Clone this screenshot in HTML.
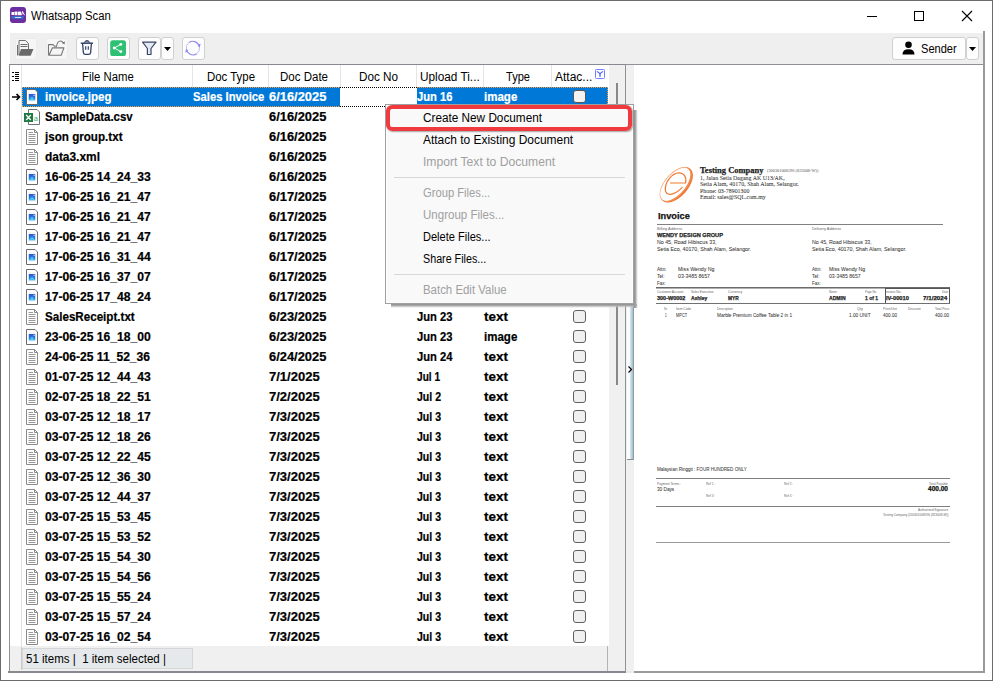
<!DOCTYPE html><html><head><meta charset="utf-8"><style>
html,body{margin:0;padding:0;width:993px;height:681px;overflow:hidden;background:#fff;font-family:'Liberation Sans', sans-serif;}
.r{position:absolute;}
.t{position:absolute;white-space:pre;line-height:1;transform-origin:0 0;}
.b{-webkit-text-stroke:0.2px currentColor;}
.db{-webkit-text-stroke:0.25px currentColor;}
.dr{-webkit-text-stroke:0.06px currentColor;}
</style></head><body>
<div class="r" style="left:0px;top:0px;width:993px;height:681px;background:#fff;"></div>
<div class="r" style="left:0px;top:0px;width:993px;height:1px;background:#6b6b6b;"></div>
<div class="r" style="left:0px;top:0px;width:1px;height:681px;background:#6b6b6b;"></div>
<div class="r" style="left:992px;top:0px;width:1px;height:681px;background:#6b6b6b;"></div>
<div class="r" style="left:0px;top:680px;width:993px;height:1px;background:#6b6b6b;"></div>
<svg class="r" style="left:10px;top:7px" width="16" height="16" viewBox="0 0 16 16">
<rect x="0" y="0" width="16" height="16" rx="3" fill="#6c2fa0"/>
<rect x="1.5" y="5" width="2.5" height="3" fill="#fff"/><rect x="4.5" y="4.6" width="3" height="3.6" fill="#fff"/><rect x="8" y="4.6" width="3" height="3.6" fill="#fff"/>
<path d="M11.5 8.2 L12.5 4.5 L14.5 8.2" stroke="#fff" stroke-width="1" fill="none"/>
<path d="M1 9.2 H14 L13 11.8 H2 Z" fill="#2a7ad5"/>
<rect x="5" y="10" width="6" height="1" fill="#cfe3ff"/>
</svg>
<div class="t" style="left:31.00px;top:9.84px;font-size:12px;transform:scaleX(0.9412);color:#000;font-family:'Liberation Sans', sans-serif;">Whatsapp Scan</div>
<div class="r" style="left:867px;top:16px;width:10px;height:1px;background:#000;"></div>
<div class="r" style="left:914px;top:11px;width:10px;height:10px;border:1px solid #000;box-sizing:border-box;"></div>
<svg class="r" style="left:961px;top:10px" width="12" height="12" viewBox="0 0 12 12"><path d="M1 1 L11 11 M11 1 L1 11" stroke="#000" stroke-width="1.1"/></svg>
<div class="r" style="left:10px;top:33px;width:973px;height:31px;background:#efefef;"></div>
<div class="r" style="left:15px;top:38px;width:22px;height:22px;background:#f6f6f6;border:1px solid #ececec;border-radius:3px;box-sizing:border-box;"></div>
<div class="r" style="left:46px;top:38px;width:22px;height:22px;background:#f6f6f6;border:1px solid #ececec;border-radius:3px;box-sizing:border-box;"></div>
<div class="r" style="left:76px;top:37px;width:23px;height:23px;background:#fdfdfd;border:1px solid #d0d0d0;border-radius:3px;box-sizing:border-box;"></div>
<div class="r" style="left:107px;top:37px;width:23px;height:23px;background:#fdfdfd;border:1px solid #d0d0d0;border-radius:3px;box-sizing:border-box;"></div>
<div class="r" style="left:138px;top:37px;width:23px;height:23px;background:#fdfdfd;border:1px solid #d0d0d0;border-radius:3px;box-sizing:border-box;"></div>
<div class="r" style="left:161px;top:37px;width:13px;height:23px;background:#fdfdfd;border:1px solid #d0d0d0;border-radius:3px;box-sizing:border-box;"></div>
<div class="r" style="left:182px;top:37px;width:23px;height:23px;background:#fdfdfd;border:1px solid #d0d0d0;border-radius:3px;box-sizing:border-box;"></div>
<svg class="r" style="left:0px;top:0px" width="993" height="70" viewBox="0 0 993 70">
<g fill="none" stroke="#6e6e6e" stroke-width="1">
<path d="M19 55 V40.5 H25.5 L28.5 43.5 V49"/>
<path d="M20.5 44.5 H27.5 M20.5 46.5 H27.5"/>
<path d="M17.5 45 V55.5"/>
</g>
<path d="M18.6 55.8 L21 49 H33.5 L30.6 55.8 Z" fill="#6a6a6a"/>
<g fill="none" stroke="#777" stroke-width="1.1" stroke-linejoin="round">
<path d="M48.5 55.2 V44.6 H53 L54.5 46.2 H57"/>
<path d="M49 55.2 L52.3 47.9 H63.9 L61.2 55.2 Z"/>
<path d="M56.5 46.5 Q57.5 40.5 61 41 Q62.8 41.3 63.4 43.4"/>
</g>
<path d="M61.7 42.8 L64.6 44.6 L64.9 41.5 Z" fill="#777"/>
<g stroke="#33416a" fill="none">
<path d="M80.8 43.2 H93" stroke-width="1.5"/>
<path d="M84.6 42.8 Q84.6 40.6 87 40.6 Q89.4 40.6 89.4 42.8" fill="#7c8296" stroke-width="1"/>
<path d="M82.6 43.8 L83.4 52.6 Q83.6 54.4 85.4 54.4 H88.6 Q90.4 54.4 90.6 52.6 L91.4 43.8" stroke-width="1.3"/>
<path d="M85.7 46.3 V49.8 M88.3 46.3 V49.8" stroke-width="1.2"/>
</g>
<rect x="110.2" y="40.2" width="15.8" height="15.8" rx="2.6" fill="#2fc173"/>
<path d="M114.3 48 L120.8 44.4 M114.3 48 L120.8 51.6" stroke="#fff" stroke-width="0.9"/>
<circle cx="114.3" cy="48" r="1.45" fill="#fff"/><circle cx="120.8" cy="44.4" r="1.45" fill="#fff"/><circle cx="120.8" cy="51.6" r="1.45" fill="#fff"/>
<path d="M142.6 42.2 H156 L151 48.5 V54.5 H147.4 V48.5 Z" fill="#e4e9f3" stroke="#3a4668" stroke-width="1.2" stroke-linejoin="round"/>
<path d="M164 47 H171 L167.5 51 Z" fill="#000"/>
<path d="M199.3 47 A6.6 6.6 0 0 0 189 42.5" fill="none" stroke="#8f8af2" stroke-width="1.1"/>
<path d="M186.5 49.2 A6.6 6.6 0 0 0 196.8 53.7" fill="none" stroke="#8f8af2" stroke-width="1.1"/>
<path d="M197.5 44.5 L199.6 47.8 L200.6 43.8 Z" fill="#8f8af2"/>
<path d="M188.3 51.7 L186.2 48.4 L185.2 52.4 Z" fill="#8f8af2"/>
<path d="M189 42.5 A6.6 6.6 0 0 0 186.4 49.3" fill="none" stroke="#b9b6f6" stroke-width="0.9"/>
<path d="M196.8 53.7 A6.6 6.6 0 0 0 199.4 46.9" fill="none" stroke="#b9b6f6" stroke-width="0.9"/>
</svg>
<div class="r" style="left:892px;top:37px;width:74px;height:23px;background:#fdfdfd;border:1px solid #d0d0d0;border-radius:3px;box-sizing:border-box;"></div>
<div class="r" style="left:966px;top:37px;width:13px;height:23px;background:#fdfdfd;border:1px solid #d0d0d0;border-radius:3px;box-sizing:border-box;"></div>
<svg class="r" style="left:902px;top:41px" width="14" height="14" viewBox="0 0 14 14">
<circle cx="6.5" cy="3.8" r="3.3" fill="#000"/><path d="M0.5 13.5 Q0.5 8.2 6.5 8.2 Q12.5 8.2 12.5 13.5 Z" fill="#000"/></svg>
<div class="t" style="left:921.00px;top:42.84px;font-size:12px;transform:scaleX(0.9231);color:#000;font-family:'Liberation Sans', sans-serif;">Sender</div>
<svg class="r" style="left:966px;top:37px" width="13" height="23" viewBox="0 0 13 23"><path d="M3 10 H10 L6.5 14 Z" fill="#000"/></svg>
<div class="r" style="left:9px;top:64px;width:617px;height:2px;background:#868a90;"></div>
<div class="r" style="left:626px;top:64px;width:358px;height:1px;background:#8e9297;"></div>
<div class="r" style="left:9px;top:64px;width:1px;height:608px;background:#8e9297;"></div>
<div class="r" style="left:8px;top:671px;width:618px;height:2px;background:#868a90;"></div>
<div class="r" style="left:626px;top:671px;width:8px;height:2px;background:#eaeaea;"></div>
<div class="r" style="left:634px;top:671px;width:351px;height:2px;background:#9a9a9a;"></div>
<div class="r" style="left:625px;top:64px;width:1px;height:607px;background:#8e9297;"></div>
<div class="r" style="left:609px;top:65px;width:16px;height:606px;background:#f0f0f0;"></div>
<div class="r" style="left:616px;top:83px;width:2px;height:302px;background:#888;"></div>
<div class="r" style="left:626px;top:65px;width:8px;height:606px;background:#f0f0f0;"></div>
<div class="r" style="left:627px;top:105px;width:7px;height:355px;background:linear-gradient(90deg,#fff 0,#fcfeff 40%,#cfe6f5 55%,#aac4d4 92%);border-right:1px solid #999;border-bottom:1px solid #8c8c8c;box-sizing:border-box;border-radius:0 0 1px 0;"></div>
<svg class="r" style="left:627px;top:365px" width="6" height="9" viewBox="0 0 6 9"><path d="M1.5 1.5 L4.5 4.5 L1.5 7.5" fill="none" stroke="#000" stroke-width="1.2"/></svg>
<div class="r" style="left:634px;top:65px;width:349px;height:606px;background:#fff;"></div>
<div class="r" style="left:983px;top:31px;width:2px;height:642px;background:#999;"></div>
<div class="r" style="left:10px;top:65px;width:599px;height:22px;background:#fff;"></div>
<div class="r" style="left:21px;top:65px;width:1px;height:22px;background:#e5e5e5;"></div>
<div class="r" style="left:192px;top:65px;width:1px;height:22px;background:#e5e5e5;"></div>
<div class="r" style="left:268px;top:65px;width:1px;height:22px;background:#e5e5e5;"></div>
<div class="r" style="left:340px;top:65px;width:1px;height:22px;background:#e5e5e5;"></div>
<div class="r" style="left:416px;top:65px;width:1px;height:22px;background:#e5e5e5;"></div>
<div class="r" style="left:483px;top:65px;width:1px;height:22px;background:#e5e5e5;"></div>
<div class="r" style="left:551px;top:65px;width:1px;height:22px;background:#e5e5e5;"></div>
<svg class="r" style="left:0px;top:60px" width="22" height="30" viewBox="0 60 22 30">
<g fill="#000"><rect x="12" y="72" width="2" height="1"/><rect x="12" y="76" width="2" height="1"/><rect x="12" y="80" width="2" height="1"/>
<rect x="15" y="72" width="4" height="1"/><rect x="15" y="74" width="4" height="1"/><rect x="15" y="76" width="4" height="1"/><rect x="15" y="78" width="4" height="1"/><rect x="15" y="80" width="4" height="1"/></g>
</svg>
<div class="t" style="left:82.00px;top:70.84px;font-size:12px;transform:scaleX(0.9455);color:#000;font-family:'Liberation Sans', sans-serif;">File Name</div>
<div class="t" style="left:206.50px;top:70.84px;font-size:12px;transform:scaleX(0.9510);color:#000;font-family:'Liberation Sans', sans-serif;">Doc Type</div>
<div class="t" style="left:280.00px;top:70.84px;font-size:12px;transform:scaleX(0.9600);color:#000;font-family:'Liberation Sans', sans-serif;">Doc Date</div>
<div class="t" style="left:359.00px;top:70.84px;font-size:12px;transform:scaleX(0.9750);color:#000;font-family:'Liberation Sans', sans-serif;">Doc No</div>
<div class="t" style="left:420.00px;top:70.84px;font-size:12px;transform:scaleX(0.9836);color:#000;font-family:'Liberation Sans', sans-serif;">Upload Ti...</div>
<div class="t" style="left:506.00px;top:70.84px;font-size:12px;transform:scaleX(0.9231);color:#000;font-family:'Liberation Sans', sans-serif;">Type</div>
<div class="t" style="left:555.00px;top:70.84px;font-size:12px;color:#000;font-family:'Liberation Sans', sans-serif;">Attac...</div>
<svg class="r" style="left:595px;top:69px" width="10" height="10" viewBox="0 0 10 10"><rect x="0.5" y="0.5" width="9" height="9" rx="0.8" fill="#fff" stroke="#7080ff" stroke-width="1"/><path d="M2.3 2.6 L5 4.6 L7.7 2.6" fill="none" stroke="#4a5cff" stroke-width="1.1" stroke-linecap="round"/><path d="M5 4.4 V7.3" stroke="#4a5cff" stroke-width="1.3" stroke-linecap="round"/></svg>
<div class="r" style="left:10px;top:87px;width:599px;height:560px;background:#fff;"></div>
<div class="r" style="left:21px;top:87px;width:1px;height:584px;background:#e0e0e0;"></div>
<div class="r" style="left:22px;top:87px;width:318px;height:20px;background:#0078d7;"></div>
<div class="r" style="left:417px;top:87px;width:191px;height:20px;background:#0078d7;"></div>
<div class="r" style="left:22px;top:87px;width:318px;height:1px;background:repeating-linear-gradient(90deg,#ff9b2f 0 1px,transparent 1px 2px);"></div>
<div class="r" style="left:22px;top:106px;width:318px;height:1px;background:repeating-linear-gradient(90deg,#ff9b2f 0 1px,transparent 1px 2px);"></div>
<div class="r" style="left:417px;top:87px;width:191px;height:1px;background:repeating-linear-gradient(90deg,#ff9b2f 0 1px,transparent 1px 2px);"></div>
<div class="r" style="left:417px;top:106px;width:191px;height:1px;background:repeating-linear-gradient(90deg,#ff9b2f 0 1px,transparent 1px 2px);"></div>
<div class="r" style="left:22px;top:87px;width:1px;height:20px;background:repeating-linear-gradient(180deg,#ff9b2f 0 1px,transparent 1px 2px);"></div>
<div class="r" style="left:607px;top:87px;width:1px;height:20px;background:repeating-linear-gradient(180deg,#ff9b2f 0 1px,transparent 1px 2px);"></div>
<div class="r" style="left:340px;top:87px;width:77px;height:1px;background:repeating-linear-gradient(90deg,#000 0 1px,transparent 1px 2px);"></div>
<div class="r" style="left:340px;top:106px;width:77px;height:1px;background:repeating-linear-gradient(90deg,#000 0 1px,transparent 1px 2px);"></div>
<svg class="r" style="left:12px;top:93px" width="9" height="8" viewBox="0 0 9 8"><path d="M0 4 H7 M4.5 1 L7.5 4 L4.5 7" fill="none" stroke="#000" stroke-width="1.6"/></svg>
<svg class="r" style="left:26px;top:89px" width="12" height="16" viewBox="0 0 12 16">
<path d="M0.5 0.5 H9 L11.5 3 V15.5 H0.5 Z" fill="#fff" stroke="#6a6a6a" stroke-width="1"/>
<rect x="2" y="3" width="8" height="10" fill="#f6f6f6"/>
<defs><linearGradient id="ig" x1="0" y1="0" x2="0" y2="1"><stop offset="0" stop-color="#2a55d0"/><stop offset="1" stop-color="#2f8ef0"/></linearGradient></defs>
<rect x="2.8" y="5" width="6.4" height="6.2" fill="url(#ig)"/>
<path d="M2.8 11.2 L6 7.6 L9.2 11.2 Z" fill="#3ec3f4"/>
<rect x="7.5" y="5.7" width="1.1" height="1.1" fill="#fff"/>
</svg>
<div class="t b" style="left:44.50px;top:90.84px;font-size:12px;font-weight:bold;transform:scaleX(0.9580);color:#fff;font-family:'Liberation Sans', sans-serif;">invoice.jpeg</div>
<div class="t b" style="left:193.30px;top:90.84px;font-size:12px;font-weight:bold;transform:scaleX(0.9382);color:#fff;font-family:'Liberation Sans', sans-serif;">Sales Invoice</div>
<div class="t b" style="left:269.40px;top:90.84px;font-size:12px;font-weight:bold;transform:scaleX(1.0741);color:#fff;font-family:'Liberation Sans', sans-serif;">6/16/2025</div>
<div class="t b" style="left:417.20px;top:90.84px;font-size:12px;font-weight:bold;transform:scaleX(0.9316);color:#fff;font-family:'Liberation Sans', sans-serif;">Jun 16</div>
<div class="t b" style="left:484.40px;top:90.84px;font-size:12px;font-weight:bold;transform:scaleX(0.9600);color:#fff;font-family:'Liberation Sans', sans-serif;">image</div>
<div class="r" style="left:573px;top:90px;width:13px;height:13px;background:#f3f3f3;border:1px solid #5a5555;border-radius:3px;box-sizing:border-box;"></div>
<svg class="r" style="left:24px;top:109px" width="17" height="16" viewBox="0 0 17 16">
<path d="M4.5 0.5 H13 L15.5 3 V15.5 H4.5 Z" fill="#fff" stroke="#707070" stroke-width="1"/>
<rect x="0" y="4" width="9" height="9" fill="#1d7a43"/>
<path d="M2.2 6 L6.8 11 M6.8 6 L2.2 11" stroke="#fff" stroke-width="1.3"/>
<text x="9.8" y="12.2" font-size="7.5" font-family="Liberation Sans" fill="#2fb86e">a</text>
</svg>
<div class="t b" style="left:44.50px;top:110.84px;font-size:12px;font-weight:bold;transform:scaleX(0.9522);color:#000;font-family:'Liberation Sans', sans-serif;">SampleData.csv</div>
<div class="t b" style="left:269.40px;top:110.84px;font-size:12px;font-weight:bold;transform:scaleX(1.0741);color:#000;font-family:'Liberation Sans', sans-serif;">6/16/2025</div>
<div class="r" style="left:573px;top:110px;width:13px;height:13px;background:#f0f0f0;border:1px solid #5f5f5f;border-radius:3px;box-sizing:border-box;"></div>
<svg class="r" style="left:26px;top:129px" width="12" height="16" viewBox="0 0 12 16">
<path d="M0.5 0.5 H8.5 L11.5 3.5 V15.5 H0.5 Z" fill="#fff" stroke="#8a8a8a" stroke-width="1"/>
<path d="M8.5 0.5 V3.5 H11.5" fill="none" stroke="#8a8a8a" stroke-width="1"/>
<path d="M2.5 3.5 H7 M2.5 5.5 H9.5 M2.5 7.5 H9.5 M2.5 9.5 H9.5 M2.5 11.5 H9.5 M2.5 13.5 H9.5" stroke="#9a9a9a" stroke-width="1"/>
</svg>
<div class="t b" style="left:45.47px;top:130.84px;font-size:12px;font-weight:bold;transform:scaleX(0.9691);color:#000;font-family:'Liberation Sans', sans-serif;">json group.txt</div>
<div class="t b" style="left:269.40px;top:130.84px;font-size:12px;font-weight:bold;transform:scaleX(1.0741);color:#000;font-family:'Liberation Sans', sans-serif;">6/16/2025</div>
<div class="r" style="left:573px;top:130px;width:13px;height:13px;background:#f0f0f0;border:1px solid #5f5f5f;border-radius:3px;box-sizing:border-box;"></div>
<svg class="r" style="left:26px;top:149px" width="12" height="16" viewBox="0 0 12 16">
<path d="M0.5 0.5 H8.5 L11.5 3.5 V15.5 H0.5 Z" fill="#fff" stroke="#8a8a8a" stroke-width="1"/>
<path d="M8.5 0.5 V3.5 H11.5" fill="none" stroke="#8a8a8a" stroke-width="1"/>
<path d="M2.5 3.5 H7 M2.5 5.5 H9.5 M2.5 7.5 H9.5 M2.5 9.5 H9.5 M2.5 11.5 H9.5 M2.5 13.5 H9.5" stroke="#9a9a9a" stroke-width="1"/>
</svg>
<div class="t b" style="left:44.50px;top:150.84px;font-size:12px;font-weight:bold;transform:scaleX(0.9927);color:#000;font-family:'Liberation Sans', sans-serif;">data3.xml</div>
<div class="t b" style="left:269.40px;top:150.84px;font-size:12px;font-weight:bold;transform:scaleX(1.0741);color:#000;font-family:'Liberation Sans', sans-serif;">6/16/2025</div>
<div class="r" style="left:573px;top:150px;width:13px;height:13px;background:#f0f0f0;border:1px solid #5f5f5f;border-radius:3px;box-sizing:border-box;"></div>
<svg class="r" style="left:26px;top:169px" width="12" height="16" viewBox="0 0 12 16">
<path d="M0.5 0.5 H9 L11.5 3 V15.5 H0.5 Z" fill="#fff" stroke="#6a6a6a" stroke-width="1"/>
<rect x="2" y="3" width="8" height="10" fill="#f6f6f6"/>
<defs><linearGradient id="ig" x1="0" y1="0" x2="0" y2="1"><stop offset="0" stop-color="#2a55d0"/><stop offset="1" stop-color="#2f8ef0"/></linearGradient></defs>
<rect x="2.8" y="5" width="6.4" height="6.2" fill="url(#ig)"/>
<path d="M2.8 11.2 L6 7.6 L9.2 11.2 Z" fill="#3ec3f4"/>
<rect x="7.5" y="5.7" width="1.1" height="1.1" fill="#fff"/>
</svg>
<div class="t b" style="left:44.50px;top:170.84px;font-size:12px;font-weight:bold;transform:scaleX(1.0095);color:#000;font-family:'Liberation Sans', sans-serif;">16-06-25 14_24_33</div>
<div class="t b" style="left:269.40px;top:170.84px;font-size:12px;font-weight:bold;transform:scaleX(1.0741);color:#000;font-family:'Liberation Sans', sans-serif;">6/16/2025</div>
<div class="r" style="left:573px;top:170px;width:13px;height:13px;background:#f0f0f0;border:1px solid #5f5f5f;border-radius:3px;box-sizing:border-box;"></div>
<svg class="r" style="left:26px;top:189px" width="12" height="16" viewBox="0 0 12 16">
<path d="M0.5 0.5 H9 L11.5 3 V15.5 H0.5 Z" fill="#fff" stroke="#6a6a6a" stroke-width="1"/>
<rect x="2" y="3" width="8" height="10" fill="#f6f6f6"/>
<defs><linearGradient id="ig" x1="0" y1="0" x2="0" y2="1"><stop offset="0" stop-color="#2a55d0"/><stop offset="1" stop-color="#2f8ef0"/></linearGradient></defs>
<rect x="2.8" y="5" width="6.4" height="6.2" fill="url(#ig)"/>
<path d="M2.8 11.2 L6 7.6 L9.2 11.2 Z" fill="#3ec3f4"/>
<rect x="7.5" y="5.7" width="1.1" height="1.1" fill="#fff"/>
</svg>
<div class="t b" style="left:44.50px;top:190.84px;font-size:12px;font-weight:bold;transform:scaleX(1.0095);color:#000;font-family:'Liberation Sans', sans-serif;">17-06-25 16_21_47</div>
<div class="t b" style="left:269.40px;top:190.84px;font-size:12px;font-weight:bold;transform:scaleX(1.0741);color:#000;font-family:'Liberation Sans', sans-serif;">6/17/2025</div>
<div class="r" style="left:573px;top:190px;width:13px;height:13px;background:#f0f0f0;border:1px solid #5f5f5f;border-radius:3px;box-sizing:border-box;"></div>
<svg class="r" style="left:26px;top:209px" width="12" height="16" viewBox="0 0 12 16">
<path d="M0.5 0.5 H9 L11.5 3 V15.5 H0.5 Z" fill="#fff" stroke="#6a6a6a" stroke-width="1"/>
<rect x="2" y="3" width="8" height="10" fill="#f6f6f6"/>
<defs><linearGradient id="ig" x1="0" y1="0" x2="0" y2="1"><stop offset="0" stop-color="#2a55d0"/><stop offset="1" stop-color="#2f8ef0"/></linearGradient></defs>
<rect x="2.8" y="5" width="6.4" height="6.2" fill="url(#ig)"/>
<path d="M2.8 11.2 L6 7.6 L9.2 11.2 Z" fill="#3ec3f4"/>
<rect x="7.5" y="5.7" width="1.1" height="1.1" fill="#fff"/>
</svg>
<div class="t b" style="left:44.50px;top:210.84px;font-size:12px;font-weight:bold;transform:scaleX(1.0095);color:#000;font-family:'Liberation Sans', sans-serif;">17-06-25 16_21_47</div>
<div class="t b" style="left:269.40px;top:210.84px;font-size:12px;font-weight:bold;transform:scaleX(1.0741);color:#000;font-family:'Liberation Sans', sans-serif;">6/17/2025</div>
<div class="r" style="left:573px;top:210px;width:13px;height:13px;background:#f0f0f0;border:1px solid #5f5f5f;border-radius:3px;box-sizing:border-box;"></div>
<svg class="r" style="left:26px;top:229px" width="12" height="16" viewBox="0 0 12 16">
<path d="M0.5 0.5 H9 L11.5 3 V15.5 H0.5 Z" fill="#fff" stroke="#6a6a6a" stroke-width="1"/>
<rect x="2" y="3" width="8" height="10" fill="#f6f6f6"/>
<defs><linearGradient id="ig" x1="0" y1="0" x2="0" y2="1"><stop offset="0" stop-color="#2a55d0"/><stop offset="1" stop-color="#2f8ef0"/></linearGradient></defs>
<rect x="2.8" y="5" width="6.4" height="6.2" fill="url(#ig)"/>
<path d="M2.8 11.2 L6 7.6 L9.2 11.2 Z" fill="#3ec3f4"/>
<rect x="7.5" y="5.7" width="1.1" height="1.1" fill="#fff"/>
</svg>
<div class="t b" style="left:44.50px;top:230.84px;font-size:12px;font-weight:bold;transform:scaleX(1.0095);color:#000;font-family:'Liberation Sans', sans-serif;">17-06-25 16_21_47</div>
<div class="t b" style="left:269.40px;top:230.84px;font-size:12px;font-weight:bold;transform:scaleX(1.0741);color:#000;font-family:'Liberation Sans', sans-serif;">6/17/2025</div>
<div class="r" style="left:573px;top:230px;width:13px;height:13px;background:#f0f0f0;border:1px solid #5f5f5f;border-radius:3px;box-sizing:border-box;"></div>
<svg class="r" style="left:26px;top:249px" width="12" height="16" viewBox="0 0 12 16">
<path d="M0.5 0.5 H9 L11.5 3 V15.5 H0.5 Z" fill="#fff" stroke="#6a6a6a" stroke-width="1"/>
<rect x="2" y="3" width="8" height="10" fill="#f6f6f6"/>
<defs><linearGradient id="ig" x1="0" y1="0" x2="0" y2="1"><stop offset="0" stop-color="#2a55d0"/><stop offset="1" stop-color="#2f8ef0"/></linearGradient></defs>
<rect x="2.8" y="5" width="6.4" height="6.2" fill="url(#ig)"/>
<path d="M2.8 11.2 L6 7.6 L9.2 11.2 Z" fill="#3ec3f4"/>
<rect x="7.5" y="5.7" width="1.1" height="1.1" fill="#fff"/>
</svg>
<div class="t b" style="left:44.50px;top:250.84px;font-size:12px;font-weight:bold;transform:scaleX(1.0095);color:#000;font-family:'Liberation Sans', sans-serif;">17-06-25 16_31_44</div>
<div class="t b" style="left:269.40px;top:250.84px;font-size:12px;font-weight:bold;transform:scaleX(1.0741);color:#000;font-family:'Liberation Sans', sans-serif;">6/17/2025</div>
<div class="r" style="left:573px;top:250px;width:13px;height:13px;background:#f0f0f0;border:1px solid #5f5f5f;border-radius:3px;box-sizing:border-box;"></div>
<svg class="r" style="left:26px;top:269px" width="12" height="16" viewBox="0 0 12 16">
<path d="M0.5 0.5 H9 L11.5 3 V15.5 H0.5 Z" fill="#fff" stroke="#6a6a6a" stroke-width="1"/>
<rect x="2" y="3" width="8" height="10" fill="#f6f6f6"/>
<defs><linearGradient id="ig" x1="0" y1="0" x2="0" y2="1"><stop offset="0" stop-color="#2a55d0"/><stop offset="1" stop-color="#2f8ef0"/></linearGradient></defs>
<rect x="2.8" y="5" width="6.4" height="6.2" fill="url(#ig)"/>
<path d="M2.8 11.2 L6 7.6 L9.2 11.2 Z" fill="#3ec3f4"/>
<rect x="7.5" y="5.7" width="1.1" height="1.1" fill="#fff"/>
</svg>
<div class="t b" style="left:44.50px;top:270.84px;font-size:12px;font-weight:bold;transform:scaleX(1.0095);color:#000;font-family:'Liberation Sans', sans-serif;">17-06-25 16_37_07</div>
<div class="t b" style="left:269.40px;top:270.84px;font-size:12px;font-weight:bold;transform:scaleX(1.0741);color:#000;font-family:'Liberation Sans', sans-serif;">6/17/2025</div>
<div class="r" style="left:573px;top:270px;width:13px;height:13px;background:#f0f0f0;border:1px solid #5f5f5f;border-radius:3px;box-sizing:border-box;"></div>
<svg class="r" style="left:26px;top:289px" width="12" height="16" viewBox="0 0 12 16">
<path d="M0.5 0.5 H9 L11.5 3 V15.5 H0.5 Z" fill="#fff" stroke="#6a6a6a" stroke-width="1"/>
<rect x="2" y="3" width="8" height="10" fill="#f6f6f6"/>
<defs><linearGradient id="ig" x1="0" y1="0" x2="0" y2="1"><stop offset="0" stop-color="#2a55d0"/><stop offset="1" stop-color="#2f8ef0"/></linearGradient></defs>
<rect x="2.8" y="5" width="6.4" height="6.2" fill="url(#ig)"/>
<path d="M2.8 11.2 L6 7.6 L9.2 11.2 Z" fill="#3ec3f4"/>
<rect x="7.5" y="5.7" width="1.1" height="1.1" fill="#fff"/>
</svg>
<div class="t b" style="left:44.50px;top:290.84px;font-size:12px;font-weight:bold;transform:scaleX(1.0095);color:#000;font-family:'Liberation Sans', sans-serif;">17-06-25 17_48_24</div>
<div class="t b" style="left:269.40px;top:290.84px;font-size:12px;font-weight:bold;transform:scaleX(1.0741);color:#000;font-family:'Liberation Sans', sans-serif;">6/17/2025</div>
<div class="r" style="left:573px;top:290px;width:13px;height:13px;background:#f0f0f0;border:1px solid #5f5f5f;border-radius:3px;box-sizing:border-box;"></div>
<svg class="r" style="left:26px;top:309px" width="12" height="16" viewBox="0 0 12 16">
<path d="M0.5 0.5 H8.5 L11.5 3.5 V15.5 H0.5 Z" fill="#fff" stroke="#8a8a8a" stroke-width="1"/>
<path d="M8.5 0.5 V3.5 H11.5" fill="none" stroke="#8a8a8a" stroke-width="1"/>
<path d="M2.5 3.5 H7 M2.5 5.5 H9.5 M2.5 7.5 H9.5 M2.5 9.5 H9.5 M2.5 11.5 H9.5 M2.5 13.5 H9.5" stroke="#9a9a9a" stroke-width="1"/>
</svg>
<div class="t b" style="left:44.50px;top:310.84px;font-size:12px;font-weight:bold;transform:scaleX(0.9677);color:#000;font-family:'Liberation Sans', sans-serif;">SalesReceipt.txt</div>
<div class="t b" style="left:269.40px;top:310.84px;font-size:12px;font-weight:bold;transform:scaleX(1.0741);color:#000;font-family:'Liberation Sans', sans-serif;">6/23/2025</div>
<div class="t b" style="left:417.20px;top:310.84px;font-size:12px;font-weight:bold;transform:scaleX(0.9316);color:#000;font-family:'Liberation Sans', sans-serif;">Jun 23</div>
<div class="t b" style="left:484.40px;top:310.84px;font-size:12px;font-weight:bold;transform:scaleX(1.1190);color:#000;font-family:'Liberation Sans', sans-serif;">text</div>
<div class="r" style="left:573px;top:310px;width:13px;height:13px;background:#f0f0f0;border:1px solid #5f5f5f;border-radius:3px;box-sizing:border-box;"></div>
<svg class="r" style="left:26px;top:329px" width="12" height="16" viewBox="0 0 12 16">
<path d="M0.5 0.5 H9 L11.5 3 V15.5 H0.5 Z" fill="#fff" stroke="#6a6a6a" stroke-width="1"/>
<rect x="2" y="3" width="8" height="10" fill="#f6f6f6"/>
<defs><linearGradient id="ig" x1="0" y1="0" x2="0" y2="1"><stop offset="0" stop-color="#2a55d0"/><stop offset="1" stop-color="#2f8ef0"/></linearGradient></defs>
<rect x="2.8" y="5" width="6.4" height="6.2" fill="url(#ig)"/>
<path d="M2.8 11.2 L6 7.6 L9.2 11.2 Z" fill="#3ec3f4"/>
<rect x="7.5" y="5.7" width="1.1" height="1.1" fill="#fff"/>
</svg>
<div class="t b" style="left:44.50px;top:330.84px;font-size:12px;font-weight:bold;transform:scaleX(1.0095);color:#000;font-family:'Liberation Sans', sans-serif;">23-06-25 16_18_00</div>
<div class="t b" style="left:269.40px;top:330.84px;font-size:12px;font-weight:bold;transform:scaleX(1.0741);color:#000;font-family:'Liberation Sans', sans-serif;">6/23/2025</div>
<div class="t b" style="left:417.20px;top:330.84px;font-size:12px;font-weight:bold;transform:scaleX(0.9316);color:#000;font-family:'Liberation Sans', sans-serif;">Jun 23</div>
<div class="t b" style="left:484.40px;top:330.84px;font-size:12px;font-weight:bold;transform:scaleX(0.9600);color:#000;font-family:'Liberation Sans', sans-serif;">image</div>
<div class="r" style="left:573px;top:330px;width:13px;height:13px;background:#f0f0f0;border:1px solid #5f5f5f;border-radius:3px;box-sizing:border-box;"></div>
<svg class="r" style="left:26px;top:349px" width="12" height="16" viewBox="0 0 12 16">
<path d="M0.5 0.5 H8.5 L11.5 3.5 V15.5 H0.5 Z" fill="#fff" stroke="#8a8a8a" stroke-width="1"/>
<path d="M8.5 0.5 V3.5 H11.5" fill="none" stroke="#8a8a8a" stroke-width="1"/>
<path d="M2.5 3.5 H7 M2.5 5.5 H9.5 M2.5 7.5 H9.5 M2.5 9.5 H9.5 M2.5 11.5 H9.5 M2.5 13.5 H9.5" stroke="#9a9a9a" stroke-width="1"/>
</svg>
<div class="t b" style="left:44.50px;top:350.84px;font-size:12px;font-weight:bold;transform:scaleX(1.0095);color:#000;font-family:'Liberation Sans', sans-serif;">24-06-25 11_52_36</div>
<div class="t b" style="left:269.40px;top:350.84px;font-size:12px;font-weight:bold;transform:scaleX(1.0741);color:#000;font-family:'Liberation Sans', sans-serif;">6/24/2025</div>
<div class="t b" style="left:417.20px;top:350.84px;font-size:12px;font-weight:bold;transform:scaleX(0.9316);color:#000;font-family:'Liberation Sans', sans-serif;">Jun 24</div>
<div class="t b" style="left:484.40px;top:350.84px;font-size:12px;font-weight:bold;transform:scaleX(1.1190);color:#000;font-family:'Liberation Sans', sans-serif;">text</div>
<div class="r" style="left:573px;top:350px;width:13px;height:13px;background:#f0f0f0;border:1px solid #5f5f5f;border-radius:3px;box-sizing:border-box;"></div>
<svg class="r" style="left:26px;top:369px" width="12" height="16" viewBox="0 0 12 16">
<path d="M0.5 0.5 H8.5 L11.5 3.5 V15.5 H0.5 Z" fill="#fff" stroke="#8a8a8a" stroke-width="1"/>
<path d="M8.5 0.5 V3.5 H11.5" fill="none" stroke="#8a8a8a" stroke-width="1"/>
<path d="M2.5 3.5 H7 M2.5 5.5 H9.5 M2.5 7.5 H9.5 M2.5 9.5 H9.5 M2.5 11.5 H9.5 M2.5 13.5 H9.5" stroke="#9a9a9a" stroke-width="1"/>
</svg>
<div class="t b" style="left:44.50px;top:370.84px;font-size:12px;font-weight:bold;transform:scaleX(1.0095);color:#000;font-family:'Liberation Sans', sans-serif;">01-07-25 12_44_43</div>
<div class="t b" style="left:269.40px;top:370.84px;font-size:12px;font-weight:bold;transform:scaleX(1.0851);color:#000;font-family:'Liberation Sans', sans-serif;">7/1/2025</div>
<div class="t b" style="left:417.20px;top:370.84px;font-size:12px;font-weight:bold;transform:scaleX(0.8429);color:#000;font-family:'Liberation Sans', sans-serif;">Jul 1</div>
<div class="t b" style="left:484.40px;top:370.84px;font-size:12px;font-weight:bold;transform:scaleX(1.1190);color:#000;font-family:'Liberation Sans', sans-serif;">text</div>
<div class="r" style="left:573px;top:370px;width:13px;height:13px;background:#f0f0f0;border:1px solid #5f5f5f;border-radius:3px;box-sizing:border-box;"></div>
<svg class="r" style="left:26px;top:389px" width="12" height="16" viewBox="0 0 12 16">
<path d="M0.5 0.5 H8.5 L11.5 3.5 V15.5 H0.5 Z" fill="#fff" stroke="#8a8a8a" stroke-width="1"/>
<path d="M8.5 0.5 V3.5 H11.5" fill="none" stroke="#8a8a8a" stroke-width="1"/>
<path d="M2.5 3.5 H7 M2.5 5.5 H9.5 M2.5 7.5 H9.5 M2.5 9.5 H9.5 M2.5 11.5 H9.5 M2.5 13.5 H9.5" stroke="#9a9a9a" stroke-width="1"/>
</svg>
<div class="t b" style="left:44.50px;top:390.84px;font-size:12px;font-weight:bold;transform:scaleX(1.0095);color:#000;font-family:'Liberation Sans', sans-serif;">02-07-25 18_22_51</div>
<div class="t b" style="left:269.40px;top:390.84px;font-size:12px;font-weight:bold;transform:scaleX(1.0851);color:#000;font-family:'Liberation Sans', sans-serif;">7/2/2025</div>
<div class="t b" style="left:417.20px;top:390.84px;font-size:12px;font-weight:bold;transform:scaleX(0.8786);color:#000;font-family:'Liberation Sans', sans-serif;">Jul 2</div>
<div class="t b" style="left:484.40px;top:390.84px;font-size:12px;font-weight:bold;transform:scaleX(1.1190);color:#000;font-family:'Liberation Sans', sans-serif;">text</div>
<div class="r" style="left:573px;top:390px;width:13px;height:13px;background:#f0f0f0;border:1px solid #5f5f5f;border-radius:3px;box-sizing:border-box;"></div>
<svg class="r" style="left:26px;top:409px" width="12" height="16" viewBox="0 0 12 16">
<path d="M0.5 0.5 H8.5 L11.5 3.5 V15.5 H0.5 Z" fill="#fff" stroke="#8a8a8a" stroke-width="1"/>
<path d="M8.5 0.5 V3.5 H11.5" fill="none" stroke="#8a8a8a" stroke-width="1"/>
<path d="M2.5 3.5 H7 M2.5 5.5 H9.5 M2.5 7.5 H9.5 M2.5 9.5 H9.5 M2.5 11.5 H9.5 M2.5 13.5 H9.5" stroke="#9a9a9a" stroke-width="1"/>
</svg>
<div class="t b" style="left:44.50px;top:410.84px;font-size:12px;font-weight:bold;transform:scaleX(1.0095);color:#000;font-family:'Liberation Sans', sans-serif;">03-07-25 12_18_17</div>
<div class="t b" style="left:269.40px;top:410.84px;font-size:12px;font-weight:bold;transform:scaleX(1.0851);color:#000;font-family:'Liberation Sans', sans-serif;">7/3/2025</div>
<div class="t b" style="left:417.20px;top:410.84px;font-size:12px;font-weight:bold;transform:scaleX(0.8786);color:#000;font-family:'Liberation Sans', sans-serif;">Jul 3</div>
<div class="t b" style="left:484.40px;top:410.84px;font-size:12px;font-weight:bold;transform:scaleX(1.1190);color:#000;font-family:'Liberation Sans', sans-serif;">text</div>
<div class="r" style="left:573px;top:410px;width:13px;height:13px;background:#f0f0f0;border:1px solid #5f5f5f;border-radius:3px;box-sizing:border-box;"></div>
<svg class="r" style="left:26px;top:429px" width="12" height="16" viewBox="0 0 12 16">
<path d="M0.5 0.5 H8.5 L11.5 3.5 V15.5 H0.5 Z" fill="#fff" stroke="#8a8a8a" stroke-width="1"/>
<path d="M8.5 0.5 V3.5 H11.5" fill="none" stroke="#8a8a8a" stroke-width="1"/>
<path d="M2.5 3.5 H7 M2.5 5.5 H9.5 M2.5 7.5 H9.5 M2.5 9.5 H9.5 M2.5 11.5 H9.5 M2.5 13.5 H9.5" stroke="#9a9a9a" stroke-width="1"/>
</svg>
<div class="t b" style="left:44.50px;top:430.84px;font-size:12px;font-weight:bold;transform:scaleX(1.0095);color:#000;font-family:'Liberation Sans', sans-serif;">03-07-25 12_18_26</div>
<div class="t b" style="left:269.40px;top:430.84px;font-size:12px;font-weight:bold;transform:scaleX(1.0851);color:#000;font-family:'Liberation Sans', sans-serif;">7/3/2025</div>
<div class="t b" style="left:417.20px;top:430.84px;font-size:12px;font-weight:bold;transform:scaleX(0.8786);color:#000;font-family:'Liberation Sans', sans-serif;">Jul 3</div>
<div class="t b" style="left:484.40px;top:430.84px;font-size:12px;font-weight:bold;transform:scaleX(1.1190);color:#000;font-family:'Liberation Sans', sans-serif;">text</div>
<div class="r" style="left:573px;top:430px;width:13px;height:13px;background:#f0f0f0;border:1px solid #5f5f5f;border-radius:3px;box-sizing:border-box;"></div>
<svg class="r" style="left:26px;top:449px" width="12" height="16" viewBox="0 0 12 16">
<path d="M0.5 0.5 H8.5 L11.5 3.5 V15.5 H0.5 Z" fill="#fff" stroke="#8a8a8a" stroke-width="1"/>
<path d="M8.5 0.5 V3.5 H11.5" fill="none" stroke="#8a8a8a" stroke-width="1"/>
<path d="M2.5 3.5 H7 M2.5 5.5 H9.5 M2.5 7.5 H9.5 M2.5 9.5 H9.5 M2.5 11.5 H9.5 M2.5 13.5 H9.5" stroke="#9a9a9a" stroke-width="1"/>
</svg>
<div class="t b" style="left:44.50px;top:450.84px;font-size:12px;font-weight:bold;transform:scaleX(1.0095);color:#000;font-family:'Liberation Sans', sans-serif;">03-07-25 12_22_45</div>
<div class="t b" style="left:269.40px;top:450.84px;font-size:12px;font-weight:bold;transform:scaleX(1.0851);color:#000;font-family:'Liberation Sans', sans-serif;">7/3/2025</div>
<div class="t b" style="left:417.20px;top:450.84px;font-size:12px;font-weight:bold;transform:scaleX(0.8786);color:#000;font-family:'Liberation Sans', sans-serif;">Jul 3</div>
<div class="t b" style="left:484.40px;top:450.84px;font-size:12px;font-weight:bold;transform:scaleX(1.1190);color:#000;font-family:'Liberation Sans', sans-serif;">text</div>
<div class="r" style="left:573px;top:450px;width:13px;height:13px;background:#f0f0f0;border:1px solid #5f5f5f;border-radius:3px;box-sizing:border-box;"></div>
<svg class="r" style="left:26px;top:469px" width="12" height="16" viewBox="0 0 12 16">
<path d="M0.5 0.5 H8.5 L11.5 3.5 V15.5 H0.5 Z" fill="#fff" stroke="#8a8a8a" stroke-width="1"/>
<path d="M8.5 0.5 V3.5 H11.5" fill="none" stroke="#8a8a8a" stroke-width="1"/>
<path d="M2.5 3.5 H7 M2.5 5.5 H9.5 M2.5 7.5 H9.5 M2.5 9.5 H9.5 M2.5 11.5 H9.5 M2.5 13.5 H9.5" stroke="#9a9a9a" stroke-width="1"/>
</svg>
<div class="t b" style="left:44.50px;top:470.84px;font-size:12px;font-weight:bold;transform:scaleX(1.0095);color:#000;font-family:'Liberation Sans', sans-serif;">03-07-25 12_36_30</div>
<div class="t b" style="left:269.40px;top:470.84px;font-size:12px;font-weight:bold;transform:scaleX(1.0851);color:#000;font-family:'Liberation Sans', sans-serif;">7/3/2025</div>
<div class="t b" style="left:417.20px;top:470.84px;font-size:12px;font-weight:bold;transform:scaleX(0.8786);color:#000;font-family:'Liberation Sans', sans-serif;">Jul 3</div>
<div class="t b" style="left:484.40px;top:470.84px;font-size:12px;font-weight:bold;transform:scaleX(1.1190);color:#000;font-family:'Liberation Sans', sans-serif;">text</div>
<div class="r" style="left:573px;top:470px;width:13px;height:13px;background:#f0f0f0;border:1px solid #5f5f5f;border-radius:3px;box-sizing:border-box;"></div>
<svg class="r" style="left:26px;top:489px" width="12" height="16" viewBox="0 0 12 16">
<path d="M0.5 0.5 H8.5 L11.5 3.5 V15.5 H0.5 Z" fill="#fff" stroke="#8a8a8a" stroke-width="1"/>
<path d="M8.5 0.5 V3.5 H11.5" fill="none" stroke="#8a8a8a" stroke-width="1"/>
<path d="M2.5 3.5 H7 M2.5 5.5 H9.5 M2.5 7.5 H9.5 M2.5 9.5 H9.5 M2.5 11.5 H9.5 M2.5 13.5 H9.5" stroke="#9a9a9a" stroke-width="1"/>
</svg>
<div class="t b" style="left:44.50px;top:490.84px;font-size:12px;font-weight:bold;transform:scaleX(1.0095);color:#000;font-family:'Liberation Sans', sans-serif;">03-07-25 12_44_37</div>
<div class="t b" style="left:269.40px;top:490.84px;font-size:12px;font-weight:bold;transform:scaleX(1.0851);color:#000;font-family:'Liberation Sans', sans-serif;">7/3/2025</div>
<div class="t b" style="left:417.20px;top:490.84px;font-size:12px;font-weight:bold;transform:scaleX(0.8786);color:#000;font-family:'Liberation Sans', sans-serif;">Jul 3</div>
<div class="t b" style="left:484.40px;top:490.84px;font-size:12px;font-weight:bold;transform:scaleX(1.1190);color:#000;font-family:'Liberation Sans', sans-serif;">text</div>
<div class="r" style="left:573px;top:490px;width:13px;height:13px;background:#f0f0f0;border:1px solid #5f5f5f;border-radius:3px;box-sizing:border-box;"></div>
<svg class="r" style="left:26px;top:509px" width="12" height="16" viewBox="0 0 12 16">
<path d="M0.5 0.5 H8.5 L11.5 3.5 V15.5 H0.5 Z" fill="#fff" stroke="#8a8a8a" stroke-width="1"/>
<path d="M8.5 0.5 V3.5 H11.5" fill="none" stroke="#8a8a8a" stroke-width="1"/>
<path d="M2.5 3.5 H7 M2.5 5.5 H9.5 M2.5 7.5 H9.5 M2.5 9.5 H9.5 M2.5 11.5 H9.5 M2.5 13.5 H9.5" stroke="#9a9a9a" stroke-width="1"/>
</svg>
<div class="t b" style="left:44.50px;top:510.84px;font-size:12px;font-weight:bold;transform:scaleX(1.0095);color:#000;font-family:'Liberation Sans', sans-serif;">03-07-25 15_53_45</div>
<div class="t b" style="left:269.40px;top:510.84px;font-size:12px;font-weight:bold;transform:scaleX(1.0851);color:#000;font-family:'Liberation Sans', sans-serif;">7/3/2025</div>
<div class="t b" style="left:417.20px;top:510.84px;font-size:12px;font-weight:bold;transform:scaleX(0.8786);color:#000;font-family:'Liberation Sans', sans-serif;">Jul 3</div>
<div class="t b" style="left:484.40px;top:510.84px;font-size:12px;font-weight:bold;transform:scaleX(1.1190);color:#000;font-family:'Liberation Sans', sans-serif;">text</div>
<div class="r" style="left:573px;top:510px;width:13px;height:13px;background:#f0f0f0;border:1px solid #5f5f5f;border-radius:3px;box-sizing:border-box;"></div>
<svg class="r" style="left:26px;top:529px" width="12" height="16" viewBox="0 0 12 16">
<path d="M0.5 0.5 H8.5 L11.5 3.5 V15.5 H0.5 Z" fill="#fff" stroke="#8a8a8a" stroke-width="1"/>
<path d="M8.5 0.5 V3.5 H11.5" fill="none" stroke="#8a8a8a" stroke-width="1"/>
<path d="M2.5 3.5 H7 M2.5 5.5 H9.5 M2.5 7.5 H9.5 M2.5 9.5 H9.5 M2.5 11.5 H9.5 M2.5 13.5 H9.5" stroke="#9a9a9a" stroke-width="1"/>
</svg>
<div class="t b" style="left:44.50px;top:530.84px;font-size:12px;font-weight:bold;transform:scaleX(1.0095);color:#000;font-family:'Liberation Sans', sans-serif;">03-07-25 15_53_52</div>
<div class="t b" style="left:269.40px;top:530.84px;font-size:12px;font-weight:bold;transform:scaleX(1.0851);color:#000;font-family:'Liberation Sans', sans-serif;">7/3/2025</div>
<div class="t b" style="left:417.20px;top:530.84px;font-size:12px;font-weight:bold;transform:scaleX(0.8786);color:#000;font-family:'Liberation Sans', sans-serif;">Jul 3</div>
<div class="t b" style="left:484.40px;top:530.84px;font-size:12px;font-weight:bold;transform:scaleX(1.1190);color:#000;font-family:'Liberation Sans', sans-serif;">text</div>
<div class="r" style="left:573px;top:530px;width:13px;height:13px;background:#f0f0f0;border:1px solid #5f5f5f;border-radius:3px;box-sizing:border-box;"></div>
<svg class="r" style="left:26px;top:549px" width="12" height="16" viewBox="0 0 12 16">
<path d="M0.5 0.5 H8.5 L11.5 3.5 V15.5 H0.5 Z" fill="#fff" stroke="#8a8a8a" stroke-width="1"/>
<path d="M8.5 0.5 V3.5 H11.5" fill="none" stroke="#8a8a8a" stroke-width="1"/>
<path d="M2.5 3.5 H7 M2.5 5.5 H9.5 M2.5 7.5 H9.5 M2.5 9.5 H9.5 M2.5 11.5 H9.5 M2.5 13.5 H9.5" stroke="#9a9a9a" stroke-width="1"/>
</svg>
<div class="t b" style="left:44.50px;top:550.84px;font-size:12px;font-weight:bold;transform:scaleX(1.0095);color:#000;font-family:'Liberation Sans', sans-serif;">03-07-25 15_54_30</div>
<div class="t b" style="left:269.40px;top:550.84px;font-size:12px;font-weight:bold;transform:scaleX(1.0851);color:#000;font-family:'Liberation Sans', sans-serif;">7/3/2025</div>
<div class="t b" style="left:417.20px;top:550.84px;font-size:12px;font-weight:bold;transform:scaleX(0.8786);color:#000;font-family:'Liberation Sans', sans-serif;">Jul 3</div>
<div class="t b" style="left:484.40px;top:550.84px;font-size:12px;font-weight:bold;transform:scaleX(1.1190);color:#000;font-family:'Liberation Sans', sans-serif;">text</div>
<div class="r" style="left:573px;top:550px;width:13px;height:13px;background:#f0f0f0;border:1px solid #5f5f5f;border-radius:3px;box-sizing:border-box;"></div>
<svg class="r" style="left:26px;top:569px" width="12" height="16" viewBox="0 0 12 16">
<path d="M0.5 0.5 H8.5 L11.5 3.5 V15.5 H0.5 Z" fill="#fff" stroke="#8a8a8a" stroke-width="1"/>
<path d="M8.5 0.5 V3.5 H11.5" fill="none" stroke="#8a8a8a" stroke-width="1"/>
<path d="M2.5 3.5 H7 M2.5 5.5 H9.5 M2.5 7.5 H9.5 M2.5 9.5 H9.5 M2.5 11.5 H9.5 M2.5 13.5 H9.5" stroke="#9a9a9a" stroke-width="1"/>
</svg>
<div class="t b" style="left:44.50px;top:570.84px;font-size:12px;font-weight:bold;transform:scaleX(1.0095);color:#000;font-family:'Liberation Sans', sans-serif;">03-07-25 15_54_56</div>
<div class="t b" style="left:269.40px;top:570.84px;font-size:12px;font-weight:bold;transform:scaleX(1.0851);color:#000;font-family:'Liberation Sans', sans-serif;">7/3/2025</div>
<div class="t b" style="left:417.20px;top:570.84px;font-size:12px;font-weight:bold;transform:scaleX(0.8786);color:#000;font-family:'Liberation Sans', sans-serif;">Jul 3</div>
<div class="t b" style="left:484.40px;top:570.84px;font-size:12px;font-weight:bold;transform:scaleX(1.1190);color:#000;font-family:'Liberation Sans', sans-serif;">text</div>
<div class="r" style="left:573px;top:570px;width:13px;height:13px;background:#f0f0f0;border:1px solid #5f5f5f;border-radius:3px;box-sizing:border-box;"></div>
<svg class="r" style="left:26px;top:589px" width="12" height="16" viewBox="0 0 12 16">
<path d="M0.5 0.5 H8.5 L11.5 3.5 V15.5 H0.5 Z" fill="#fff" stroke="#8a8a8a" stroke-width="1"/>
<path d="M8.5 0.5 V3.5 H11.5" fill="none" stroke="#8a8a8a" stroke-width="1"/>
<path d="M2.5 3.5 H7 M2.5 5.5 H9.5 M2.5 7.5 H9.5 M2.5 9.5 H9.5 M2.5 11.5 H9.5 M2.5 13.5 H9.5" stroke="#9a9a9a" stroke-width="1"/>
</svg>
<div class="t b" style="left:44.50px;top:590.84px;font-size:12px;font-weight:bold;transform:scaleX(1.0095);color:#000;font-family:'Liberation Sans', sans-serif;">03-07-25 15_55_24</div>
<div class="t b" style="left:269.40px;top:590.84px;font-size:12px;font-weight:bold;transform:scaleX(1.0851);color:#000;font-family:'Liberation Sans', sans-serif;">7/3/2025</div>
<div class="t b" style="left:417.20px;top:590.84px;font-size:12px;font-weight:bold;transform:scaleX(0.8786);color:#000;font-family:'Liberation Sans', sans-serif;">Jul 3</div>
<div class="t b" style="left:484.40px;top:590.84px;font-size:12px;font-weight:bold;transform:scaleX(1.1190);color:#000;font-family:'Liberation Sans', sans-serif;">text</div>
<div class="r" style="left:573px;top:590px;width:13px;height:13px;background:#f0f0f0;border:1px solid #5f5f5f;border-radius:3px;box-sizing:border-box;"></div>
<svg class="r" style="left:26px;top:609px" width="12" height="16" viewBox="0 0 12 16">
<path d="M0.5 0.5 H8.5 L11.5 3.5 V15.5 H0.5 Z" fill="#fff" stroke="#8a8a8a" stroke-width="1"/>
<path d="M8.5 0.5 V3.5 H11.5" fill="none" stroke="#8a8a8a" stroke-width="1"/>
<path d="M2.5 3.5 H7 M2.5 5.5 H9.5 M2.5 7.5 H9.5 M2.5 9.5 H9.5 M2.5 11.5 H9.5 M2.5 13.5 H9.5" stroke="#9a9a9a" stroke-width="1"/>
</svg>
<div class="t b" style="left:44.50px;top:610.84px;font-size:12px;font-weight:bold;transform:scaleX(1.0095);color:#000;font-family:'Liberation Sans', sans-serif;">03-07-25 15_57_24</div>
<div class="t b" style="left:269.40px;top:610.84px;font-size:12px;font-weight:bold;transform:scaleX(1.0851);color:#000;font-family:'Liberation Sans', sans-serif;">7/3/2025</div>
<div class="t b" style="left:417.20px;top:610.84px;font-size:12px;font-weight:bold;transform:scaleX(0.8786);color:#000;font-family:'Liberation Sans', sans-serif;">Jul 3</div>
<div class="t b" style="left:484.40px;top:610.84px;font-size:12px;font-weight:bold;transform:scaleX(1.1190);color:#000;font-family:'Liberation Sans', sans-serif;">text</div>
<div class="r" style="left:573px;top:610px;width:13px;height:13px;background:#f0f0f0;border:1px solid #5f5f5f;border-radius:3px;box-sizing:border-box;"></div>
<svg class="r" style="left:26px;top:629px" width="12" height="16" viewBox="0 0 12 16">
<path d="M0.5 0.5 H8.5 L11.5 3.5 V15.5 H0.5 Z" fill="#fff" stroke="#8a8a8a" stroke-width="1"/>
<path d="M8.5 0.5 V3.5 H11.5" fill="none" stroke="#8a8a8a" stroke-width="1"/>
<path d="M2.5 3.5 H7 M2.5 5.5 H9.5 M2.5 7.5 H9.5 M2.5 9.5 H9.5 M2.5 11.5 H9.5 M2.5 13.5 H9.5" stroke="#9a9a9a" stroke-width="1"/>
</svg>
<div class="t b" style="left:44.50px;top:630.84px;font-size:12px;font-weight:bold;transform:scaleX(1.0095);color:#000;font-family:'Liberation Sans', sans-serif;">03-07-25 16_02_54</div>
<div class="t b" style="left:269.40px;top:630.84px;font-size:12px;font-weight:bold;transform:scaleX(1.0851);color:#000;font-family:'Liberation Sans', sans-serif;">7/3/2025</div>
<div class="t b" style="left:417.20px;top:630.84px;font-size:12px;font-weight:bold;transform:scaleX(0.8786);color:#000;font-family:'Liberation Sans', sans-serif;">Jul 3</div>
<div class="t b" style="left:484.40px;top:630.84px;font-size:12px;font-weight:bold;transform:scaleX(1.1190);color:#000;font-family:'Liberation Sans', sans-serif;">text</div>
<div class="r" style="left:573px;top:630px;width:13px;height:13px;background:#f0f0f0;border:1px solid #5f5f5f;border-radius:3px;box-sizing:border-box;"></div>
<div class="r" style="left:10px;top:646px;width:599px;height:25px;background:#f0f0f0;"></div>
<div class="r" style="left:607px;top:646px;width:1px;height:25px;background:#b4b4b4;"></div>
<div class="r" style="left:21px;top:647px;width:1px;height:23px;background:#c8c8c8;"></div>
<div class="r" style="left:22px;top:648px;width:171px;height:21px;background:#e6e9eb;border:1px solid #d6d6d6;box-sizing:border-box;"></div>
<div class="t" style="left:26.40px;top:652.84px;font-size:12px;transform:scaleX(0.9610);color:#000;font-family:'Liberation Sans', sans-serif;">51 items |  1 item selected |</div>
<div class="r" style="left:391px;top:304px;width:246px;height:4px;background:linear-gradient(180deg,#8e8e8e,#a8a8a8 40%,rgba(200,200,200,0.5) 75%,rgba(255,255,255,0));"></div>
<div class="r" style="left:634px;top:110px;width:4px;height:198px;background:linear-gradient(90deg,#8e8e8e,#a8a8a8 40%,rgba(200,200,200,0.5) 75%,rgba(255,255,255,0));"></div>
<div class="r" style="left:385px;top:104px;width:249px;height:200px;background:#f9f9f9;border:1px solid #a0a0a0;box-sizing:border-box;box-shadow:inset 0 0 0 1px #fdfdfd;"></div>
<div class="t" style="left:423.10px;top:111.84px;font-size:12px;transform:scaleX(0.9803);color:#000;font-family:'Liberation Sans', sans-serif;">Create New Document</div>
<div class="t" style="left:423.10px;top:133.84px;font-size:12px;transform:scaleX(0.9960);color:#000;font-family:'Liberation Sans', sans-serif;">Attach to Existing Document</div>
<div class="t" style="left:423.10px;top:155.84px;font-size:12px;transform:scaleX(1.0115);color:#a0a0a0;font-family:'Liberation Sans', sans-serif;">Import Text to Document</div>
<div class="r" style="left:394px;top:177px;width:231px;height:1px;background:#d7d7d7;"></div>
<div class="t" style="left:423.10px;top:186.84px;font-size:12px;transform:scaleX(0.9333);color:#a0a0a0;font-family:'Liberation Sans', sans-serif;">Group Files...</div>
<div class="t" style="left:423.10px;top:208.84px;font-size:12px;transform:scaleX(0.9600);color:#a0a0a0;font-family:'Liberation Sans', sans-serif;">Ungroup Files...</div>
<div class="t" style="left:423.10px;top:230.84px;font-size:12px;transform:scaleX(0.9205);color:#000;font-family:'Liberation Sans', sans-serif;">Delete Files...</div>
<div class="t" style="left:423.10px;top:252.84px;font-size:12px;transform:scaleX(0.8944);color:#000;font-family:'Liberation Sans', sans-serif;">Share Files...</div>
<div class="r" style="left:394px;top:274px;width:231px;height:1px;background:#d7d7d7;"></div>
<div class="t" style="left:423.10px;top:283.84px;font-size:12px;transform:scaleX(0.9523);color:#a0a0a0;font-family:'Liberation Sans', sans-serif;">Batch Edit Value</div>
<div class="r" style="left:386px;top:105px;width:246px;height:26px;border:4.5px solid #ef3b3f;border-radius:6px;box-sizing:border-box;box-shadow:1px 1px 1.5px rgba(0,0,0,0.35);"></div>
<svg class="r" style="left:655px;top:163px" width="45" height="44" viewBox="0 0 45 44">
<g transform="translate(21.4,21.8) rotate(-49)">
<ellipse cx="0" cy="0" rx="21.2" ry="11.8" fill="#f07a33"/>
<ellipse cx="-0.4" cy="-1.3" rx="20.2" ry="10.1" fill="#fff"/>
<ellipse cx="-0.3" cy="-0.8" rx="20.4" ry="10.7" fill="none" stroke="#f4a071" stroke-width="0.5"/>
</g>
<path d="M15 20 H30.6 C31.8 13.5 28.5 9.8 24 9.8 C16.5 9.8 10 19.5 10.3 26.8 C10.6 33 18.5 33.5 27.5 24.2" fill="none" stroke="#f07a33" stroke-width="1.2"/>
</svg>
<div class="t db" style="left:700.20px;top:166.46px;font-size:9px;font-weight:bold;transform:scaleX(0.9412);color:#222;font-family:'Liberation Serif', serif;">Testing Company</div>
<div class="t" style="left:767.00px;top:169.15px;font-size:4px;transform:scaleX(1.0833);color:#555;font-family:'Liberation Serif', serif;">(200301008596 (823008-W))</div>
<div class="t dr" style="left:700.20px;top:174.56px;font-size:6.5px;transform:scaleX(0.9140);color:#3a3a3a;font-family:'Liberation Serif', serif;">1, Jalan Setia Dagang AK U13/AK,</div>
<div class="t dr" style="left:700.20px;top:181.06px;font-size:6.5px;transform:scaleX(0.9167);color:#3a3a3a;font-family:'Liberation Serif', serif;">Setia Alam, 40170, Shah Alam, Selangor.</div>
<div class="t dr" style="left:700.20px;top:187.56px;font-size:6.5px;transform:scaleX(0.9091);color:#3a3a3a;font-family:'Liberation Serif', serif;">Phone: 03-78901300</div>
<div class="t dr" style="left:700.20px;top:194.06px;font-size:6.5px;transform:scaleX(0.9041);color:#3a3a3a;font-family:'Liberation Serif', serif;">Email: sales@SQL.com.my</div>
<div class="t db" style="left:657.50px;top:212.38px;font-size:9px;font-weight:bold;transform:scaleX(1.0258);color:#111;font-family:'Liberation Sans', sans-serif;">Invoice</div>
<div class="r" style="left:657px;top:224px;width:286px;height:1px;background:#808080;"></div>
<div class="t" style="left:657.00px;top:226.61px;font-size:4px;transform:scaleX(0.9615);color:#666;font-family:'Liberation Sans', sans-serif;">Billing Address</div>
<div class="t db" style="left:657.00px;top:231.92px;font-size:6px;font-weight:bold;transform:scaleX(0.9338);color:#222;font-family:'Liberation Sans', sans-serif;">WENDY DESIGN GROUP</div>
<div class="t dr" style="left:657.00px;top:238.92px;font-size:6px;transform:scaleX(0.8750);color:#3a3a3a;font-family:'Liberation Sans', sans-serif;">No 45, Road Hibiscus 33,</div>
<div class="t dr" style="left:657.00px;top:245.92px;font-size:6px;transform:scaleX(0.8804);color:#3a3a3a;font-family:'Liberation Sans', sans-serif;">Setia Eco, 40170, Shah Alam, Selangor.</div>
<div class="t" style="left:812.00px;top:226.61px;font-size:4px;transform:scaleX(0.9667);color:#666;font-family:'Liberation Sans', sans-serif;">Delivery Address</div>
<div class="t dr" style="left:812.00px;top:238.92px;font-size:6px;transform:scaleX(0.8779);color:#3a3a3a;font-family:'Liberation Sans', sans-serif;">No 45, Road Hibiscus 33,</div>
<div class="t dr" style="left:812.00px;top:245.92px;font-size:6px;transform:scaleX(0.8850);color:#3a3a3a;font-family:'Liberation Sans', sans-serif;">Setia Eco, 40170, Shah Alam, Selangor.</div>
<div class="t dr" style="left:657.00px;top:266.42px;font-size:6px;transform:scaleX(0.7692);color:#3a3a3a;font-family:'Liberation Sans', sans-serif;">Attn:</div>
<div class="t dr" style="left:678.40px;top:266.42px;font-size:6px;transform:scaleX(0.8714);color:#3a3a3a;font-family:'Liberation Sans', sans-serif;">Miss Wendy Ng</div>
<div class="t dr" style="left:657.00px;top:272.92px;font-size:6px;transform:scaleX(0.8000);color:#3a3a3a;font-family:'Liberation Sans', sans-serif;">Tel:</div>
<div class="t dr" style="left:678.40px;top:272.92px;font-size:6px;transform:scaleX(0.8632);color:#3a3a3a;font-family:'Liberation Sans', sans-serif;">03-3485 8657</div>
<div class="t dr" style="left:657.00px;top:279.92px;font-size:6px;transform:scaleX(0.7500);color:#3a3a3a;font-family:'Liberation Sans', sans-serif;">Fax:</div>
<div class="t dr" style="left:812.00px;top:266.42px;font-size:6px;transform:scaleX(0.7692);color:#3a3a3a;font-family:'Liberation Sans', sans-serif;">Attn:</div>
<div class="t dr" style="left:829.00px;top:266.42px;font-size:6px;transform:scaleX(0.8643);color:#3a3a3a;font-family:'Liberation Sans', sans-serif;">Miss Wendy Ng</div>
<div class="t dr" style="left:812.00px;top:272.92px;font-size:6px;transform:scaleX(0.8000);color:#3a3a3a;font-family:'Liberation Sans', sans-serif;">Tel:</div>
<div class="t dr" style="left:829.00px;top:272.92px;font-size:6px;transform:scaleX(0.8526);color:#3a3a3a;font-family:'Liberation Sans', sans-serif;">03-3485 8657</div>
<div class="t dr" style="left:812.00px;top:279.92px;font-size:6px;transform:scaleX(0.7500);color:#3a3a3a;font-family:'Liberation Sans', sans-serif;">Fax:</div>
<div class="r" style="left:656px;top:287px;width:294px;height:1px;background:#6a6a6a;"></div>
<div class="r" style="left:656px;top:288px;width:294px;height:1px;background:#b0b0b0;"></div>
<div class="t" style="left:657.00px;top:289.61px;font-size:4px;transform:scaleX(0.8088);color:#666;font-family:'Liberation Sans', sans-serif;">Customer Account</div>
<div class="t" style="left:691.00px;top:289.61px;font-size:4px;transform:scaleX(0.7931);color:#666;font-family:'Liberation Sans', sans-serif;">Sales Executive</div>
<div class="t" style="left:727.80px;top:289.61px;font-size:4px;transform:scaleX(0.8750);color:#666;font-family:'Liberation Sans', sans-serif;">Currency</div>
<div class="t" style="left:829.00px;top:289.61px;font-size:4px;transform:scaleX(0.7273);color:#666;font-family:'Liberation Sans', sans-serif;">Name</div>
<div class="t" style="left:864.50px;top:289.61px;font-size:4px;transform:scaleX(0.7188);color:#666;font-family:'Liberation Sans', sans-serif;">Page No</div>
<div class="t" style="left:885.40px;top:289.61px;font-size:4px;transform:scaleX(0.8250);color:#666;font-family:'Liberation Sans', sans-serif;">Invoice No.</div>
<div class="t" style="left:941.50px;top:289.61px;font-size:4px;transform:scaleX(0.7222);color:#666;font-family:'Liberation Sans', sans-serif;">Date</div>
<div class="t db" style="left:657.00px;top:294.92px;font-size:6px;font-weight:bold;transform:scaleX(0.9156);color:#222;font-family:'Liberation Sans', sans-serif;">300-W0002</div>
<div class="t db" style="left:691.00px;top:294.92px;font-size:6px;font-weight:bold;transform:scaleX(0.8250);color:#222;font-family:'Liberation Sans', sans-serif;">Ashley</div>
<div class="t db" style="left:727.80px;top:294.92px;font-size:6px;font-weight:bold;transform:scaleX(0.8000);color:#222;font-family:'Liberation Sans', sans-serif;">MYR</div>
<div class="t db" style="left:829.00px;top:294.92px;font-size:6px;font-weight:bold;transform:scaleX(0.8450);color:#222;font-family:'Liberation Sans', sans-serif;">ADMIN</div>
<div class="t db" style="left:864.50px;top:294.92px;font-size:6px;font-weight:bold;transform:scaleX(0.8250);color:#222;font-family:'Liberation Sans', sans-serif;">1 of 1</div>
<div class="t db" style="left:886.20px;top:294.92px;font-size:6px;font-weight:bold;transform:scaleX(0.9520);color:#222;font-family:'Liberation Sans', sans-serif;">IV-00010</div>
<div class="t db" style="left:923.30px;top:294.92px;font-size:6px;font-weight:bold;transform:scaleX(1.0375);color:#222;font-family:'Liberation Sans', sans-serif;">7/1/2024</div>
<div class="r" style="left:884.5px;top:287.5px;width:65px;height:16px;border:1.3px solid #555;box-sizing:border-box;"></div>
<div class="r" style="left:656px;top:303px;width:294px;height:1px;background:#707070;"></div>
<div class="t" style="left:663.90px;top:307.11px;font-size:4px;transform:scaleX(0.5833);color:#666;font-family:'Liberation Sans', sans-serif;">No</div>
<div class="t" style="left:676.40px;top:307.11px;font-size:4px;transform:scaleX(0.8211);color:#666;font-family:'Liberation Sans', sans-serif;">Item Code</div>
<div class="t" style="left:717.20px;top:307.11px;font-size:4px;transform:scaleX(0.7900);color:#666;font-family:'Liberation Sans', sans-serif;">Description</div>
<div class="t" style="left:857.20px;top:307.11px;font-size:4px;transform:scaleX(0.9667);color:#666;font-family:'Liberation Sans', sans-serif;">Qty</div>
<div class="t" style="left:883.00px;top:307.11px;font-size:4px;transform:scaleX(0.8056);color:#666;font-family:'Liberation Sans', sans-serif;">Price/Unit</div>
<div class="t" style="left:908.00px;top:307.11px;font-size:4px;transform:scaleX(0.8125);color:#666;font-family:'Liberation Sans', sans-serif;">Discount</div>
<div class="t" style="left:934.50px;top:307.11px;font-size:4px;transform:scaleX(0.7632);color:#666;font-family:'Liberation Sans', sans-serif;">Total Price</div>
<div class="t dr" style="left:665.00px;top:311.92px;font-size:6px;transform:scaleX(0.5000);color:#3a3a3a;font-family:'Liberation Sans', sans-serif;">1</div>
<div class="t dr" style="left:676.40px;top:311.92px;font-size:6px;transform:scaleX(0.6529);color:#3a3a3a;font-family:'Liberation Sans', sans-serif;">MPCT</div>
<div class="t dr" style="left:717.20px;top:311.92px;font-size:6px;transform:scaleX(0.7865);color:#3a3a3a;font-family:'Liberation Sans', sans-serif;">Marble Premium Coffee Table 2 in 1</div>
<div class="t dr" style="left:849.10px;top:311.92px;font-size:6px;transform:scaleX(0.7893);color:#3a3a3a;font-family:'Liberation Sans', sans-serif;">1.00 UNIT</div>
<div class="t dr" style="left:883.00px;top:311.92px;font-size:6px;transform:scaleX(0.7632);color:#3a3a3a;font-family:'Liberation Sans', sans-serif;">400.00</div>
<div class="t dr" style="left:934.50px;top:311.92px;font-size:6px;transform:scaleX(0.7632);color:#3a3a3a;font-family:'Liberation Sans', sans-serif;">400.00</div>
<div class="t dr" style="left:656.80px;top:466.84px;font-size:5.5px;transform:scaleX(0.8248);color:#3a3a3a;font-family:'Liberation Sans', sans-serif;">Malaysian Ringgit : FOUR HUNDRED ONLY</div>
<div class="r" style="left:656px;top:478px;width:294px;height:1px;background:#808080;"></div>
<div class="t" style="left:657.00px;top:481.61px;font-size:4px;transform:scaleX(0.8000);color:#666;font-family:'Liberation Sans', sans-serif;">Payment Terms :</div>
<div class="t" style="left:705.60px;top:481.61px;font-size:4px;transform:scaleX(0.7833);color:#666;font-family:'Liberation Sans', sans-serif;">Ref 1 :</div>
<div class="t" style="left:783.70px;top:481.61px;font-size:4px;transform:scaleX(0.7750);color:#666;font-family:'Liberation Sans', sans-serif;">Ref 2 :</div>
<div class="t" style="left:928.80px;top:481.61px;font-size:4px;transform:scaleX(0.7840);color:#666;font-family:'Liberation Sans', sans-serif;">Total Payable</div>
<div class="t dr" style="left:657.00px;top:485.92px;font-size:6px;transform:scaleX(0.7818);color:#3a3a3a;font-family:'Liberation Sans', sans-serif;">30 Days</div>
<div class="t db" style="left:928.30px;top:486.00px;font-size:6.5px;font-weight:bold;transform:scaleX(1.0050);color:#111;font-family:'Liberation Sans', sans-serif;">400.00</div>
<div class="t" style="left:705.60px;top:494.11px;font-size:4px;transform:scaleX(0.7833);color:#666;font-family:'Liberation Sans', sans-serif;">Ref 3 :</div>
<div class="t" style="left:783.70px;top:494.11px;font-size:4px;transform:scaleX(0.7750);color:#666;font-family:'Liberation Sans', sans-serif;">Ref 4 :</div>
<div class="r" style="left:656px;top:506px;width:294px;height:1px;background:#808080;"></div>
<div class="t" style="left:917.70px;top:508.11px;font-size:4px;transform:scaleX(0.8079);color:#666;font-family:'Liberation Sans', sans-serif;">Authorised Signature</div>
<div class="t" style="left:882.60px;top:513.41px;font-size:4px;transform:scaleX(0.7833);color:#666;font-family:'Liberation Sans', sans-serif;">Testing Company (200301008596 (823008-W))</div>
<div class="r" style="left:656px;top:542px;width:294px;height:1px;background:#9a9a9a;"></div>
</body></html>
